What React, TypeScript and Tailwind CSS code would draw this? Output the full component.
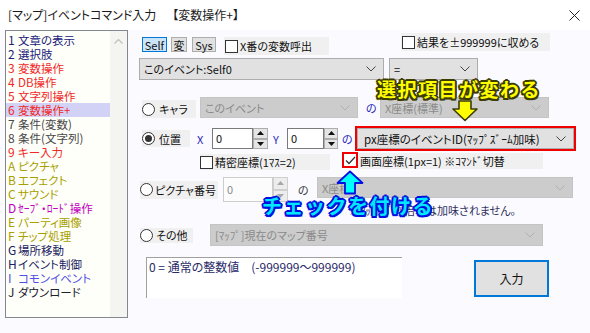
import React from "react";

const Chevron = ({ color = "#444" }: { color?: string }) => (
  <svg width="10" height="6" viewBox="0 0 10 6">
    <polyline points="0.5,0.5 5,5 9.5,0.5" fill="none" stroke={color} strokeWidth="1" />
  </svg>
);

const Radio = ({ checked }: { checked?: boolean }) => (
  <span className="flex h-[13px] w-[13px] shrink-0 items-center justify-center rounded-full border border-[#333] bg-white">
    {checked && <span className="h-[7px] w-[7px] rounded-full bg-[#333]" />}
  </span>
);

const Check = ({ checked }: { checked?: boolean }) => (
  <span className="flex h-[13px] w-[13px] shrink-0 items-center justify-center border border-[#333] bg-white">
    {checked && (
      <svg width="11" height="9" viewBox="0 0 11 9">
        <polyline points="1,4.5 4,7.5 10,1" fill="none" stroke="#333" strokeWidth="1.3" />
      </svg>
    )}
  </span>
);

const Tri = ({ up, color }: { up?: boolean; color: string }) => (
  <svg width="7" height="4" viewBox="0 0 7 4">
    <polygon points={up ? "0,4 7,4 3.5,0" : "0,0 7,0 3.5,4"} fill={color} />
  </svg>
);

const SpinButtons = ({ w, disabled }: { w: string; disabled?: boolean }) => {
  const c = disabled ? "#A8A8A8" : "#111";
  const b = disabled
    ? "flex flex-1 items-center justify-center border border-[#CFCFCF] bg-[#EDEDED]"
    : "flex flex-1 items-center justify-center border border-[#ADADAD] bg-[#E5E5E5]";
  return (
    <div className={`flex h-full flex-col ${w}`}>
      <div className={b}>
        <Tri up color={c} />
      </div>
      <div className={b}>
        <Tri color={c} />
      </div>
    </div>
  );
};

const items: { n: string; t: string; c: string }[] = [
  { n: "1", t: "文章の表示", c: "text-[#20207A]" },
  { n: "2", t: "選択肢", c: "text-[#20207A]" },
  { n: "3", t: "変数操作", c: "text-[#F02828]" },
  { n: "4", t: "DB操作", c: "text-[#F02828]" },
  { n: "5", t: "文字列操作", c: "text-[#F02828]" },
  { n: "6", t: "変数操作+", c: "text-[#F02828]" },
  { n: "7", t: "条件(変数)", c: "text-[#484848]" },
  { n: "8", t: "条件(文字列)", c: "text-[#484848]" },
  { n: "9", t: "キー入力", c: "text-[#F02828]" },
  { n: "A", t: "ピクチャ", c: "text-[#A8A000]" },
  { n: "B", t: "エフェクト", c: "text-[#A8A000]" },
  { n: "C", t: "サウンド", c: "text-[#A8A000]" },
  { n: "D", t: "ｾｰﾌﾞ・ﾛｰﾄﾞ操作", c: "text-[#C000C0]" },
  { n: "E", t: "パーティ画像", c: "text-[#A8A000]" },
  { n: "F", t: "チップ処理", c: "text-[#A8A000]" },
  { n: "G", t: "場所移動", c: "text-[#202060]" },
  { n: "H", t: "イベント制御", c: "text-[#202060]" },
  { n: "I", t: "コモンイベント", c: "text-[#5050E8]" },
  { n: "J", t: "ダウンロード", c: "text-[#202030]" },
];

const dd = "flex items-center justify-between border border-[#ADADAD] bg-[#E1E1E1] pl-[4px] pr-[7px] text-[#111]";
const ddOff = "flex items-center justify-between border border-[#C4C4C4] bg-[#CCCCCC] pl-[4px] pr-[7px] text-[#8A8A8A]";

const yellowShadow =
  "[text-shadow:2px_0_0_#3C3C00,-2px_0_0_#3C3C00,0_2px_0_#3C3C00,0_-2px_0_#3C3C00,1.5px_1.5px_0_#3C3C00,-1.5px_-1.5px_0_#3C3C00,1.5px_-1.5px_0_#3C3C00,-1.5px_1.5px_0_#3C3C00]";
const cyanShadow =
  "[text-shadow:2px_0_0_#0010E0,-2px_0_0_#0010E0,0_2px_0_#0010E0,0_-2px_0_#0010E0,1.5px_1.5px_0_#0010E0,-1.5px_-1.5px_0_#0010E0,1.5px_-1.5px_0_#0010E0,-1.5px_1.5px_0_#0010E0]";

export default function App() {
  return (
    <div className="relative h-[333px] w-[590px] overflow-hidden whitespace-nowrap bg-[#FAFAFF] font-['Noto_Sans_CJK_JP',sans-serif] text-[11px] leading-[14px] text-[#111] [font-feature-settings:'palt']">
      {/* title bar */}
      <div className="flex h-[30px] items-center justify-between bg-white pl-[8px] pr-[10px] text-[12px] text-[#1A1A1A]">
        <span>
          [マップ]イベントコマンド入力<span className="ml-[16px]">【変数操作+】</span>
        </span>
        <svg width="11" height="11" viewBox="0 0 11 11">
          <line x1="0.5" y1="0.5" x2="10.5" y2="10.5" stroke="#222" strokeWidth="1" />
          <line x1="10.5" y1="0.5" x2="0.5" y2="10.5" stroke="#222" strokeWidth="1" />
        </svg>
      </div>

      <div className="flex">
        {/* left list */}
        <div className="ml-[5px] flex h-[288px] w-[123px] border border-[#828790] bg-[#FFFFF9]">
          <div className="flex-1 pt-[2px] text-[12px]">
            {items.map((it, i) => (
              <div
                key={it.n}
                className={`flex h-[14px] items-center pl-[2px] ${it.c} ${i === 5 ? "bg-[#D2D2F6]" : ""}`}
              >
                <span className="w-[10px]">{it.n}</span>
                <span className="text-[11.5px]">{it.t}</span>
              </div>
            ))}
          </div>
          <div className="flex w-[17px] justify-center bg-[#F4F4F0] pt-[8px]">
            <svg width="9" height="5" viewBox="0 0 9 5">
              <polyline points="0.5,4.5 4.5,0.5 8.5,4.5" fill="none" stroke="#C0C0C0" strokeWidth="1.2" />
            </svg>
          </div>
        </div>

        {/* right panel */}
        <div className="ml-[8px] flex w-[446px] flex-col">
          {/* row 1 */}
          <div className="mt-[3px] flex h-[22px] items-start">
            <div className="ml-[6px] mt-[4px] flex h-[15px] w-[25px] items-center justify-center border border-[#0078D7] bg-[#CCE4F7]">
              Self
            </div>
            <div className="ml-[4px] mt-[4px] flex h-[15px] w-[16px] items-center justify-center border border-[#ADADAD] bg-[#E1E1E1]">
              変
            </div>
            <div className="ml-[5px] mt-[4px] flex h-[15px] w-[24px] items-center justify-center border border-[#ADADAD] bg-[#E1E1E1]">
              Sys
            </div>
            <div className="ml-[8px] mt-[4px] flex h-[18px] w-[105px] items-center gap-[2px] bg-[#F0F0F0] pl-[1px]">
              <Check />
              <span>X番の変数呼出</span>
            </div>
            <div className="ml-[72px] flex h-[18px] w-[149px] items-center gap-[2px] bg-[#F0F0F0] pl-[1px]">
              <Check />
              <span>結果を±999999に収める</span>
            </div>
          </div>

          {/* row 2 */}
          <div className="mt-[3px] flex h-[22px]">
            <div className={`ml-[3px] w-[245px] ${dd}`}>
              <span>このイベント:Self0</span>
              <Chevron />
            </div>
            <div className={`ml-[5px] w-[89px] ${dd}`}>
              <span>=</span>
              <Chevron />
            </div>
          </div>

          {/* row 3 キャラ */}
          <div className="mt-[17px] flex h-[21px] items-end">
            <div className="ml-[6px] flex h-[18px] w-[54px] items-center gap-[4px] bg-[#F0F0F0]">
              <Radio />
              <span>キャラ</span>
            </div>
            <div className={`ml-[4px] h-[21px] w-[158px] ${ddOff}`}>
              <span>このイベント</span>
              <Chevron color="#B0B0B0" />
            </div>
            <span className="ml-[8px] w-[12px] self-center text-[#2828B8]">の</span>
            <div className={`ml-[2px] h-[21px] w-[169px] ${ddOff}`}>
              <span>X座標(標準)</span>
              <Chevron color="#B0B0B0" />
            </div>
          </div>

          {/* row 4 位置 */}
          <div className="mt-[8px] flex h-[25px] items-center">
            <div className="ml-[6px] flex h-[17px] w-[48px] items-center gap-[4px] bg-[#F0F0F0]">
              <Radio checked />
              <span>位置</span>
            </div>
            <span className="ml-[7px] w-[15px] text-[#2828B8]">X</span>
            <div className="flex h-[21px]">
              <div className="w-[41px] border border-[#7A7A7A] bg-white pl-[3px] pt-[2px]">0</div>
              <SpinButtons w="w-[15px]" />
            </div>
            <span className="ml-[5px] w-[14px] text-[#2828B8]">Y</span>
            <div className="flex h-[21px]">
              <div className="w-[37px] border border-[#7A7A7A] bg-white pl-[3px] pt-[2px]">0</div>
              <SpinButtons w="w-[14px]" />
            </div>
            <span className="ml-[4px] w-[12px] text-[#2828B8]">の</span>
            <div className="ml-[1px] h-[25px] w-[221px] border-2 border-[#F00000]">
              <div className={`h-full w-full ${dd} pl-[6px]`}>
                <span className="text-[11.5px]">px座標のイベントID(ﾏｯﾌﾟｽﾞｰﾑ加味)</span>
                <Chevron />
              </div>
            </div>
          </div>

          {/* row 5 */}
          <div className="mt-[1px] flex h-[18px] items-start">
            <div className="ml-[64px] mt-[2px] flex h-[16px] w-[130px] items-center gap-[2px] bg-[#F0F0F0]">
              <Check />
              <span>精密座標(1ﾏｽ=2)</span>
            </div>
            <div className="ml-[12px] flex h-[16px] w-[16px] items-center justify-center border-2 border-[#F00000]">
              <span className="flex h-[12px] w-[12px] items-center justify-center bg-white">
                <svg width="11" height="9" viewBox="0 0 11 9">
                  <polyline points="1,4.5 4,7.5 10,1" fill="none" stroke="#333" strokeWidth="1.3" />
                </svg>
              </span>
            </div>
            <div className="mt-[1px] flex h-[16px] w-[185px] items-center bg-[#F0F0F0] pl-[2px]">
              画面座標(1px=1) ※ｺﾏﾝﾄﾞ切替
            </div>
          </div>

          {/* row 6 ピクチャ番号 */}
          <div className="mt-[7px] flex h-[25px] items-center">
            <div className="ml-[4px] flex h-[18px] w-[78px] items-center gap-[2px] bg-[#F0F0F0]">
              <Radio />
              <span>ピクチャ番号</span>
            </div>
            <div className="ml-[5px] flex h-[25px]">
              <div className="w-[50px] border border-[#CCCCCC] bg-[#FCFCFC] pl-[3px] pt-[4px] text-[#8A8A8A]">0</div>
              <SpinButtons w="w-[15px]" disabled />
            </div>
            <span className="ml-[10px] w-[12px] text-[#404040]">の</span>
            <div className={`ml-[7px] h-[21px] w-[256px] self-start ${ddOff}`}>
              <span>X座標</span>
              <Chevron color="#B0B0B0" />
            </div>
          </div>
          <div className="mt-[1px] flex h-[14px] w-[380px] justify-end text-[#303060]">
            ※ﾏｯﾌﾟｽﾞｰﾑ倍率は加味されません。
          </div>

          {/* row 7 その他 */}
          <div className="mt-[7px] flex h-[22px] items-center">
            <div className="ml-[4px] flex h-[15px] w-[53px] items-center gap-[3px] bg-[#F0F0F0]">
              <Radio />
              <span>その他</span>
            </div>
            <div className={`ml-[17px] h-[22px] w-[333px] ${ddOff}`}>
              <span>[ﾏｯﾌﾟ]現在のマップ番号</span>
              <Chevron color="#B0B0B0" />
            </div>
          </div>

          {/* bottom */}
          <div className="mt-[11px] flex items-start">
            <div className="ml-[10px] h-[41px] w-[256px] border-l border-t border-[#A0A0A0] bg-white pl-[2px] pt-[2px] text-[12px] text-[#2A2A68]">
              0 = 通常の整数値　(-999999～999999)
            </div>
            <div className="ml-[72px] mt-[3px] flex h-[37px] w-[75px] items-center justify-center border-2 border-[#0078D7] bg-[#E1E1E1] text-[12px]">
              入力
            </div>
          </div>
        </div>
      </div>

      {/* annotations */}
      <div
        className={`absolute left-[377px] top-[78px] font-['Noto_Sans_CJK_JP',sans-serif] text-[19px] font-bold leading-[22px] tracking-[1.5px] text-[#FFFF00] [font-feature-settings:normal] ${yellowShadow}`}
      >
        選択項目が変わる
      </div>
      <svg className="absolute left-[452px] top-[99px]" width="26" height="23" viewBox="0 0 26 23">
        <polygon points="7,2 19,2 19,10 25,10 13,21.5 1,10 7,10" fill="#FFFF00" stroke="#3C3C00" strokeWidth="1.6" strokeLinejoin="round" />
      </svg>

      <svg className="absolute left-[336px] top-[170px]" width="28" height="25" viewBox="0 0 28 25">
        <polygon points="14,1.5 26.5,13 19,13 19,23.5 9,23.5 9,13 1.5,13" fill="#00FFFF" stroke="#0010E0" strokeWidth="1.8" strokeLinejoin="round" />
      </svg>
      <div
        className={`absolute left-[262px] top-[195px] font-['Noto_Sans_CJK_JP',sans-serif] text-[20px] font-bold leading-[22px] tracking-[1.5px] text-[#00E8FF] [font-feature-settings:normal] ${cyanShadow}`}
      >
        チェックを付ける
      </div>
    </div>
  );
}
